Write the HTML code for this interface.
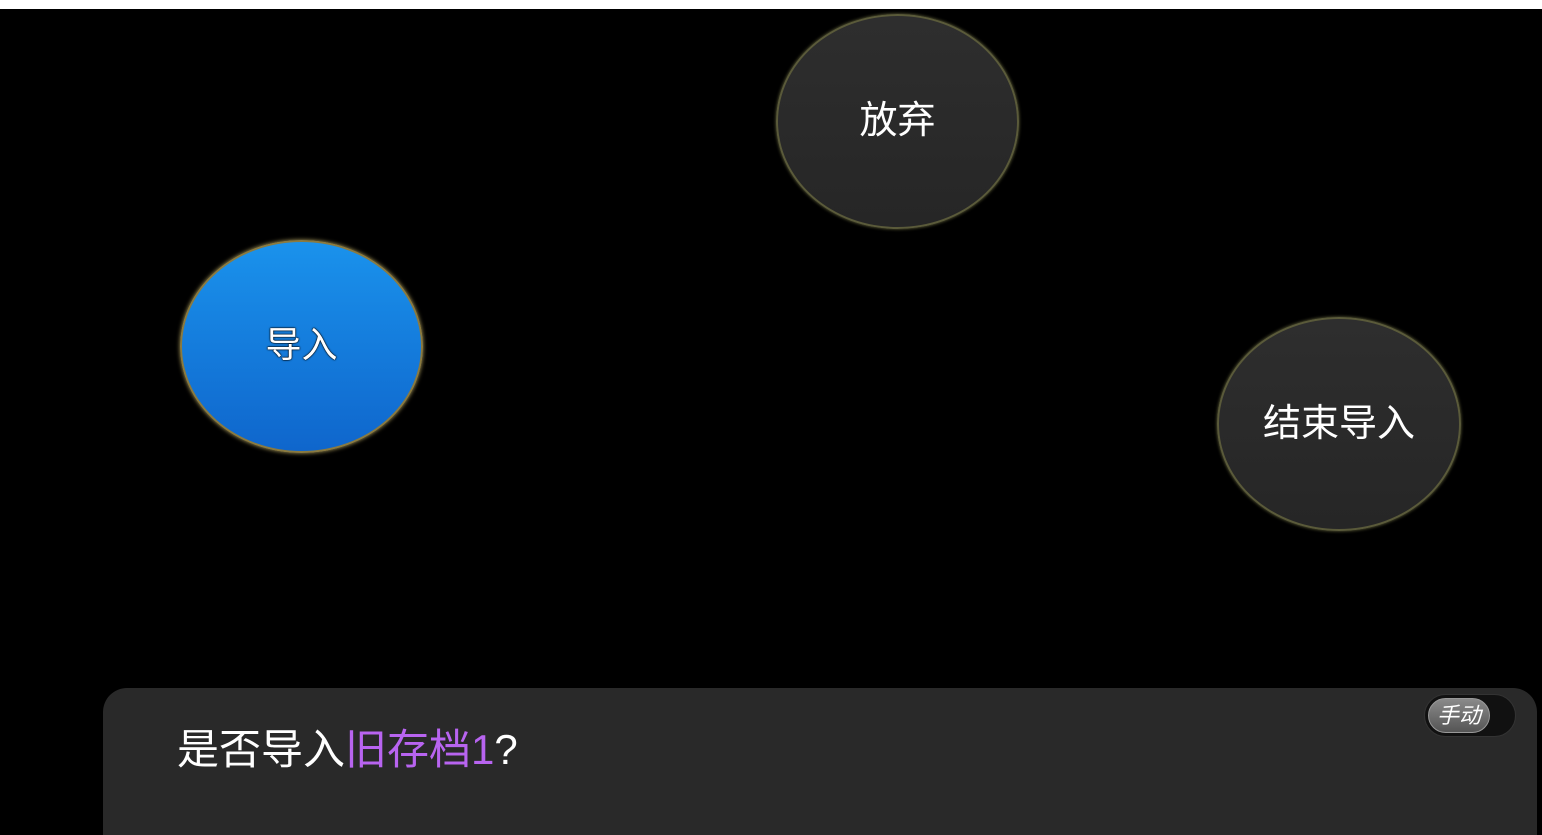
<!DOCTYPE html>
<html style="overflow:hidden;height:835px"><head><meta charset="utf-8"><style>
html,body{margin:0;height:835px;overflow:hidden}
body{width:1542px;background:#000;position:relative;font-family:"Liberation Sans","Noto Sans CJK SC",sans-serif}
.top{position:absolute;left:0;top:0;width:1542px;height:9px;background:#fff}
.c{position:absolute;border-radius:50%;display:flex;align-items:center;justify-content:center;color:#fff;box-sizing:border-box;padding-bottom:10px}
.g{background:linear-gradient(#2e2e2e,#262626);border:2px solid #5a5a3a;box-shadow:0 0 3px #6b6b40}
.b{background:linear-gradient(#1a92ec,#0f66cc);border:2px solid #8a7a40;box-shadow:0 0 4px #b0a060}
.panel{position:absolute;left:103px;top:688px;width:1434px;height:147px;background:#292929;border-radius:24px 24px 0 0}
.tg{position:absolute;left:1424px;top:694px;width:92px;height:43px;border-radius:22px;background:#111;border:1px solid #333;box-sizing:border-box}
.knob{position:absolute;left:3px;top:3px;width:62px;height:35px;border-radius:18px;background:linear-gradient(#8a8a8a,#555);border:1px solid #999;box-sizing:border-box;color:#fff;font-style:italic;font-size:22px;display:flex;align-items:center;justify-content:center;padding-bottom:3px}
</style></head><body>
<div class="top"></div>
<div class="c g" style="left:776px;top:14px;width:243px;height:215px;font-size:38px">放弃</div>
<div class="c b" style="left:180px;top:240px;width:243px;height:213px;font-size:36px;text-shadow:0 0 2px #000,0 0 1px #000,0 0 1px #000">导入</div>
<div class="c g" style="left:1217px;top:317px;width:244px;height:214px;font-size:38px">结束导入</div>
<div class="panel"></div>
<div style="position:absolute;left:177px;top:722px;font-size:42px;color:#fff;line-height:56px;white-space:nowrap">是否导入<span style="color:#b864f0">旧存档1</span>?</div>
<div class="tg"><div class="knob">手动</div></div>
</body></html>
